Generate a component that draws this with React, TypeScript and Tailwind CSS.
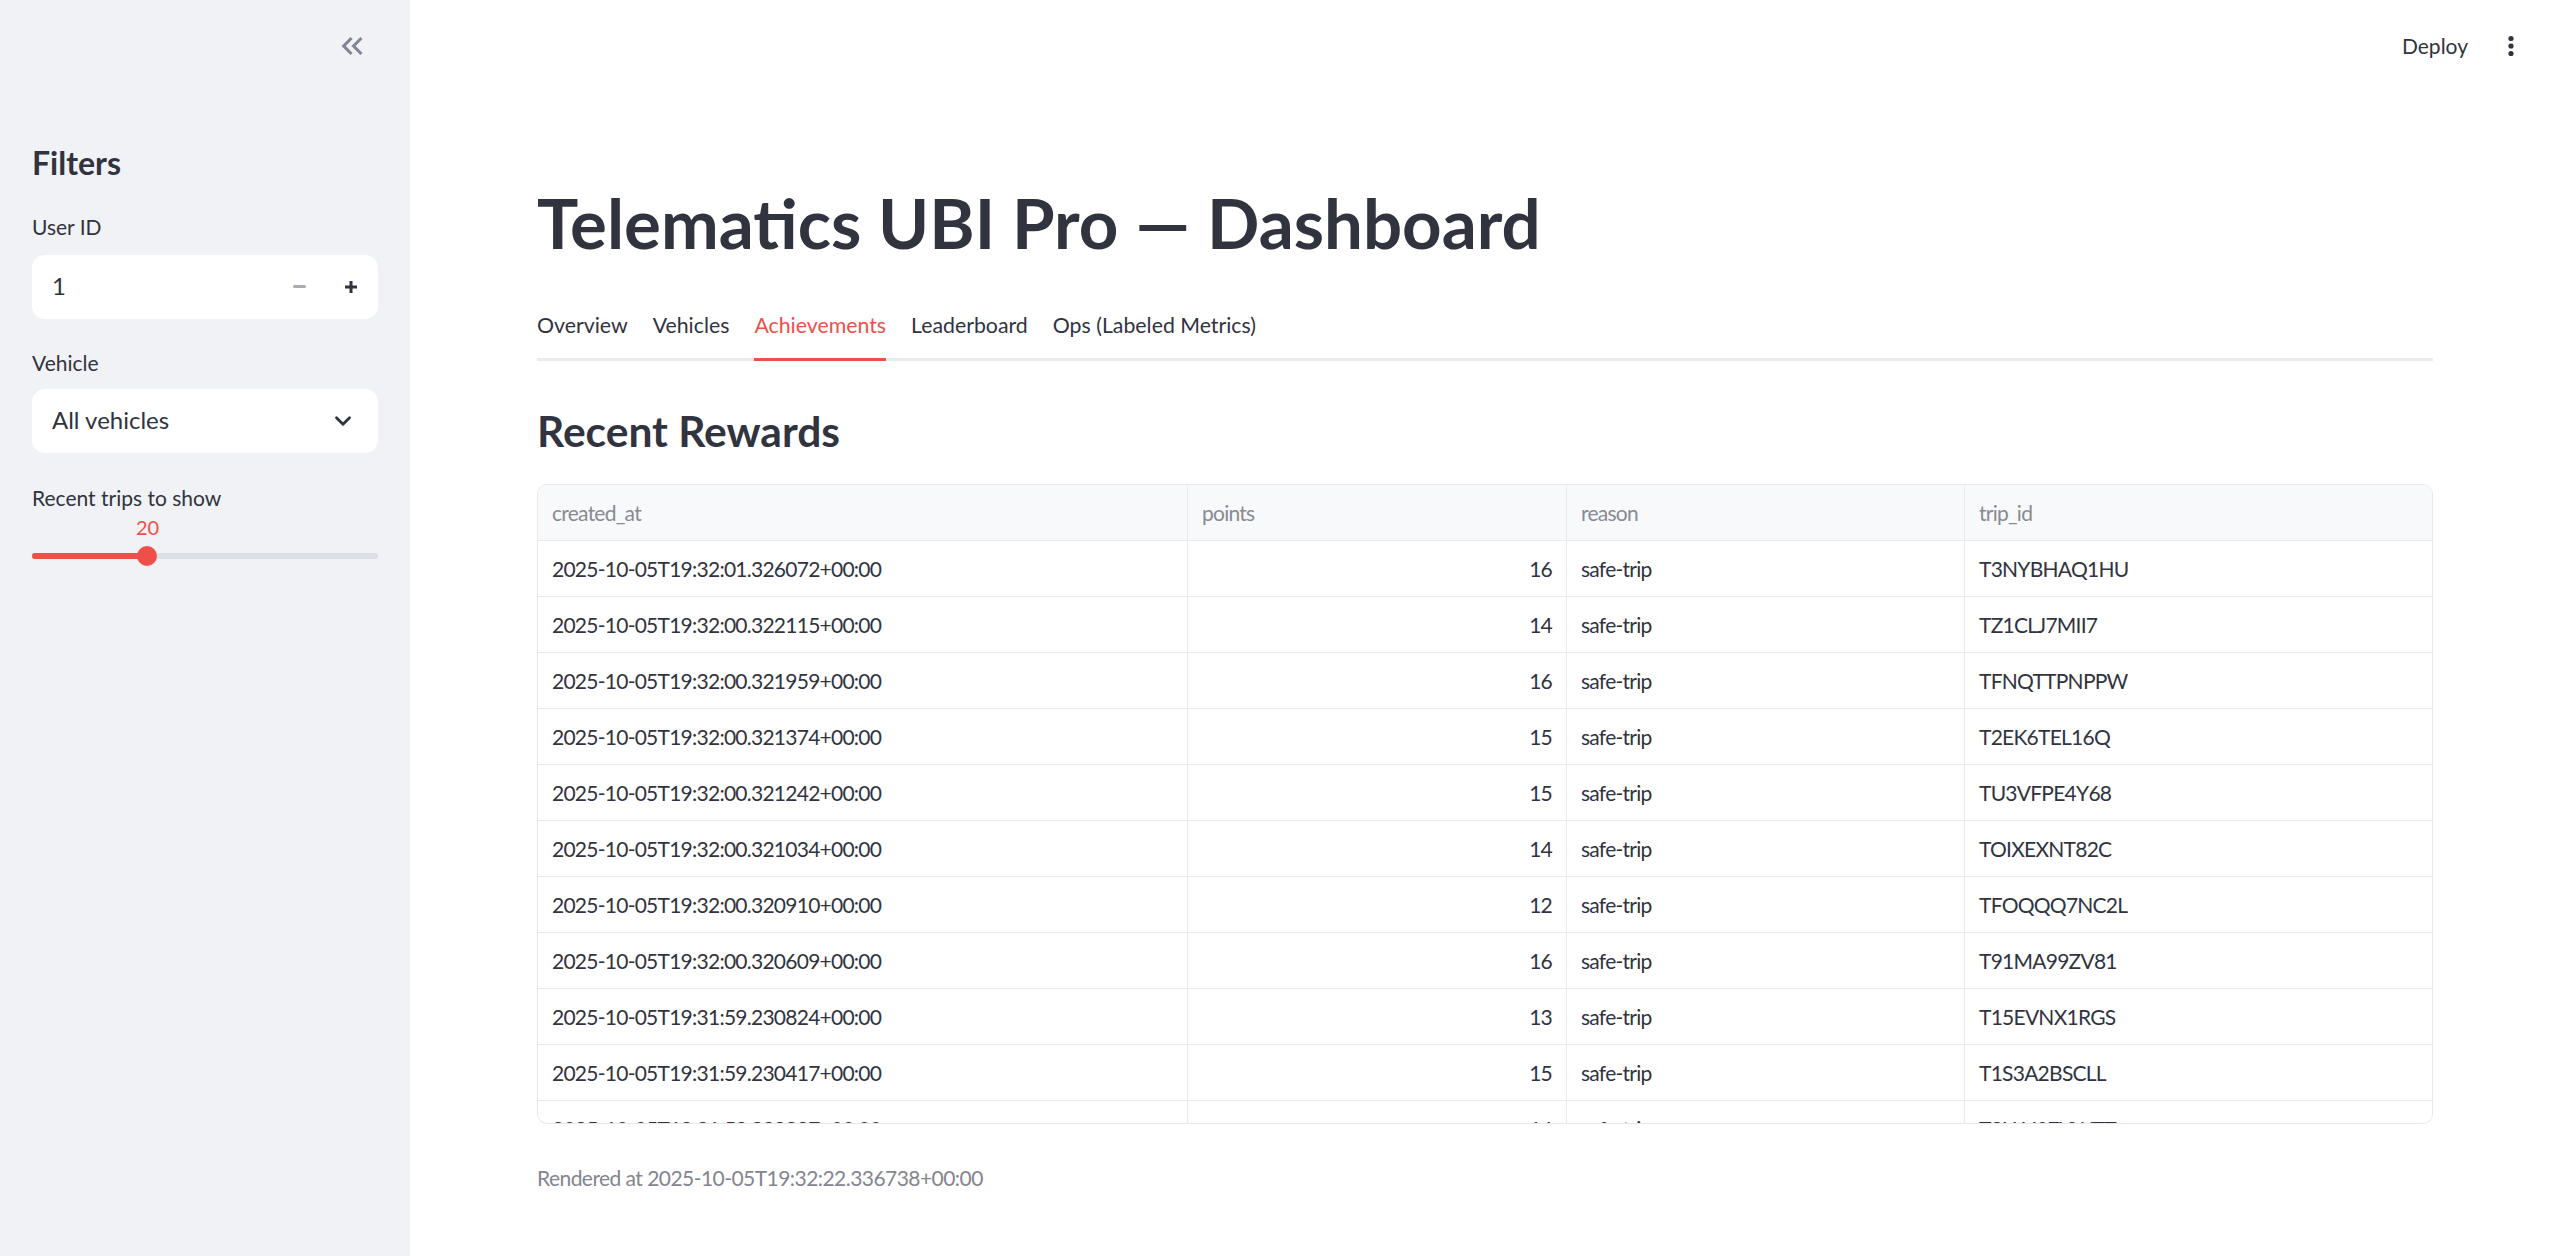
import { ChevronDown } from "lucide-react";

const tabs = ["Overview", "Vehicles", "Achievements", "Leaderboard", "Ops (Labeled Metrics)"];

const rewards = [
  ["2025-10-05T19:32:01.326072+00:00", 16, "safe-trip", "T3NYBHAQ1HU"],
  ["2025-10-05T19:32:00.322115+00:00", 14, "safe-trip", "TZ1CLJ7MII7"],
  ["2025-10-05T19:32:00.321959+00:00", 16, "safe-trip", "TFNQTTPNPPW"],
  ["2025-10-05T19:32:00.321374+00:00", 15, "safe-trip", "T2EK6TEL16Q"],
  ["2025-10-05T19:32:00.321242+00:00", 15, "safe-trip", "TU3VFPE4Y68"],
  ["2025-10-05T19:32:00.321034+00:00", 14, "safe-trip", "TOIXEXNT82C"],
  ["2025-10-05T19:32:00.320910+00:00", 12, "safe-trip", "TFOQQQ7NC2L"],
  ["2025-10-05T19:32:00.320609+00:00", 16, "safe-trip", "T91MA99ZV81"],
  ["2025-10-05T19:31:59.230824+00:00", 13, "safe-trip", "T15EVNX1RGS"],
  ["2025-10-05T19:31:59.230417+00:00", 15, "safe-trip", "T1S3A2BSCLL"],
  ["2025-10-05T19:31:59.229897+00:00", 14, "safe-trip", "T3U1J07YWTT"],
] as const;

const cell = "flex h-[56px] items-center border-b border-[#e8eaee] px-[14px]";

function Sidebar() {
  return (
    <aside className="flex w-[410px] shrink-0 flex-col bg-[#f0f2f6] px-[32px]">
      {/* collapse button */}
      <div className="flex h-[92px] items-center justify-end pr-[8px]">
        <svg width="36" height="36" viewBox="0 0 24 24" fill="#808495">
          <path d="M17.59 18L19 16.59 14.42 12 19 7.41 17.59 6l-6 6z" />
          <path d="M11 18l1.41-1.41L7.83 12l4.58-4.59L11 6l-6 6z" />
        </svg>
      </div>

      <h2 className="mt-[52px] text-[32px] font-bold leading-[1.2]">Filters</h2>

      <label className="mt-[32px] text-[21px] leading-[1.2]">User ID</label>
      <div className="mt-[15px] flex h-[64px] items-center rounded-[13px] bg-white pl-[20px] pr-[21px]">
        <span className="flex-1 text-[24px] leading-[1.2]">1</span>
        <span className="mr-[39px] h-[3px] w-[13px] rounded-full bg-[#a9abb3]" />
        <svg width="12" height="12" viewBox="0 0 12 12">
          <path d="M6 0v12M0 6h12" stroke="#31333f" strokeWidth="3" />
        </svg>
      </div>

      <label className="mt-[31px] text-[21px] leading-[1.2]">Vehicle</label>
      <div className="mt-[14px] flex h-[64px] items-center justify-between rounded-[13px] bg-white pl-[20px] pr-[22px]">
        <span className="text-[24px] leading-[1.2]">All vehicles</span>
        <ChevronDown size={26} strokeWidth={2.6} />
      </div>

      <label className="mt-[32px] text-[21px] leading-[1.2]">Recent trips to show</label>
      <div className="relative mt-[5px] h-[51px]">
        <span className="absolute left-[104px] top-0 text-[20px] leading-[1.2] text-[#ee5049]">20</span>
        <div className="absolute left-0 right-0 top-[38px] h-[6px] rounded-full bg-[#dcdfe5]">
          <div className="h-full w-[115px] rounded-full bg-[#ee5049]" />
        </div>
        <div className="absolute left-[105px] top-[31px] size-[20px] rounded-full bg-[#ee5049]" />
      </div>
    </aside>
  );
}

export default function App() {
  return (
    <div className="flex h-[1256px] w-full overflow-hidden bg-white font-[Lato,sans-serif] text-[#31333f]">
      <Sidebar />

      <main className="flex min-w-0 flex-1 flex-col">
        <div className="flex h-[92px] items-center justify-end gap-[40px] pr-[46px]">
          <span className="text-[21px] leading-[1.2]">Deploy</span>
          <svg width="6" height="22" viewBox="0 0 6 22" fill="#31333f">
            <circle cx="3" cy="3.5" r="2.6" />
            <circle cx="3" cy="11" r="2.6" />
            <circle cx="3" cy="18.5" r="2.6" />
          </svg>
        </div>

        <div className="flex flex-col px-[127px]">
          <h1 className="mt-[90px] text-[69px] font-bold leading-[1.2]">Telematics UBI Pro — Dashboard</h1>

          {/* Tabs */}
          <div className="mt-[48px] flex gap-[25px] border-b-[3px] border-[#ebebed]">
            {tabs.map((t) => (
              <div
                key={t}
                className={`relative pb-[20px] text-[21.3px] leading-[1.2] ${
                  t === "Achievements" ? "text-[#ee5049]" : ""
                }`}
              >
                {t}
                {t === "Achievements" && (
                  <span className="absolute -bottom-[3px] left-0 right-0 h-[3px] bg-[#ee5049]" />
                )}
              </div>
            ))}
          </div>

          <h3 className="mt-[44px] text-[42.5px] font-bold leading-[1.2]">Recent Rewards</h3>

          {/* Dataframe */}
          <div className="mt-[28px] h-[640px] overflow-hidden rounded-[10px] border border-[#e6e8ed] text-[21px] tracking-[-0.75px]">
            <div className="grid grid-cols-[650px_379px_398px_1fr]">
              <div className={`${cell} border-r bg-[#f8f9fb] text-[#878a94]`}>created_at</div>
              <div className={`${cell} border-r bg-[#f8f9fb] text-[#878a94]`}>points</div>
              <div className={`${cell} border-r bg-[#f8f9fb] text-[#878a94]`}>reason</div>
              <div className={`${cell} bg-[#f8f9fb] text-[#878a94]`}>trip_id</div>
              {rewards.map(([ts, pts, reason, trip]) => (
                <div key={trip} className="contents">
                  <div className={`${cell} border-r`}>{ts}</div>
                  <div className={`${cell} justify-end border-r`}>{pts}</div>
                  <div className={`${cell} border-r`}>{reason}</div>
                  <div className={cell}>{trip}</div>
                </div>
              ))}
            </div>
          </div>

          <p className="mt-[41px] text-[21px] leading-[1.2] tracking-[-0.55px] text-[#83858f]">
            Rendered at 2025-10-05T19:32:22.336738+00:00
          </p>
        </div>
      </main>
    </div>
  );
}
